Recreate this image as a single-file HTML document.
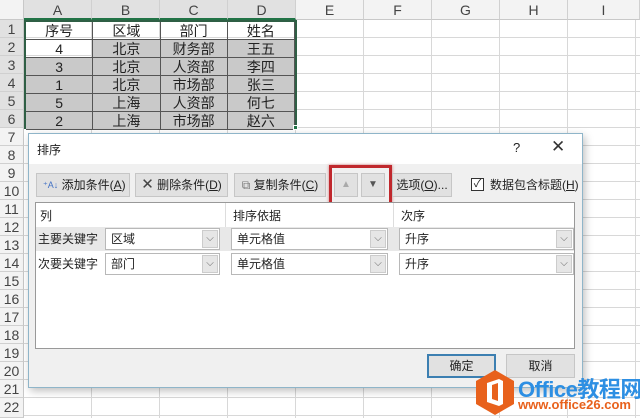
<!DOCTYPE html>
<html><head><meta charset="utf-8"><style>
*{margin:0;padding:0;box-sizing:border-box}
body{width:640px;height:418px;overflow:hidden;position:relative;background:#fff;font-family:"Liberation Sans","Noto Sans CJK SC",sans-serif;color:#222}
.a{position:absolute}
.grid{left:24px;top:20px;width:616px;height:398px;background:
repeating-linear-gradient(90deg,transparent 0 67px,#d8d8d8 67px 68px),
repeating-linear-gradient(180deg,transparent 0 17px,#d8d8d8 17px 18px)}
.colh{top:0;height:20px;width:68px;background:#f3f3f3;border-right:1px solid #d0d0d0;border-bottom:1px solid #c8c8c8;text-align:center;font-size:14px;line-height:20px;color:#444}
.colh.s{background:#e1e1e1;border-bottom:2px solid #217346}
.rowh{left:0;width:24px;height:18px;background:#f3f3f3;border-bottom:1px solid #d0d0d0;border-right:1px solid #c8c8c8;text-align:center;font-size:14px;line-height:18px;color:#444}
.rowh.s{background:#e1e1e1}
.c{height:18px;width:68px;text-align:center;font-size:14px;line-height:18px;border-right:1px solid #555;border-bottom:1px solid #555}
.g{background:#c9c9c9}
.btn{background:#e1e1e1;border:1px solid #c6c6c6;font-size:12px;line-height:22px;height:24px;text-align:center;color:#222}
.combo{background:#fff;border:1px solid #b8b8b8;height:22px;font-size:12px;line-height:20px;padding-left:5px}
.combo i{position:absolute;right:1px;top:1px;width:16px;height:18px;background:#e6e6e6;border:1px solid #ccc;font-style:normal;font-size:10px;line-height:16px;text-align:center;color:#666}
</style></head><body>
<div class="a grid"></div>
<div class="a" style="left:0;top:0;width:24px;height:20px;background:#f3f3f3;border-right:1px solid #c8c8c8;border-bottom:1px solid #c8c8c8"></div>
<div class="a colh s" style="left:24px">A</div>
<div class="a colh s" style="left:92px">B</div>
<div class="a colh s" style="left:160px">C</div>
<div class="a colh s" style="left:228px">D</div>
<div class="a colh" style="left:296px">E</div>
<div class="a colh" style="left:364px">F</div>
<div class="a colh" style="left:432px">G</div>
<div class="a colh" style="left:500px">H</div>
<div class="a colh" style="left:568px;width:72px">I</div>
<div class="a rowh s" style="top:20px">1</div>
<div class="a rowh s" style="top:38px">2</div>
<div class="a rowh s" style="top:56px">3</div>
<div class="a rowh s" style="top:74px">4</div>
<div class="a rowh s" style="top:92px">5</div>
<div class="a rowh s" style="top:110px">6</div>
<div class="a rowh" style="top:128px">7</div>
<div class="a rowh" style="top:146px">8</div>
<div class="a rowh" style="top:164px">9</div>
<div class="a rowh" style="top:182px">10</div>
<div class="a rowh" style="top:200px">11</div>
<div class="a rowh" style="top:218px">12</div>
<div class="a rowh" style="top:236px">13</div>
<div class="a rowh" style="top:254px">14</div>
<div class="a rowh" style="top:272px">15</div>
<div class="a rowh" style="top:290px">16</div>
<div class="a rowh" style="top:308px">17</div>
<div class="a rowh" style="top:326px">18</div>
<div class="a rowh" style="top:344px">19</div>
<div class="a rowh" style="top:362px">20</div>
<div class="a rowh" style="top:380px">21</div>
<div class="a rowh" style="top:398px;height:20px">22</div>

<div class="a" style="left:24px;top:20px;width:273px;height:109px;border:2px solid #2f5f45">
<div style="display:flex"><div class="c">序号</div><div class="c">区域</div><div class="c">部门</div><div class="c">姓名</div></div>
<div style="display:flex"><div class="c">4</div><div class="c g">北京</div><div class="c g">财务部</div><div class="c g">王五</div></div>
<div style="display:flex"><div class="c g">3</div><div class="c g">北京</div><div class="c g">人资部</div><div class="c g">李四</div></div>
<div style="display:flex"><div class="c g">1</div><div class="c g">北京</div><div class="c g">市场部</div><div class="c g">张三</div></div>
<div style="display:flex"><div class="c g">5</div><div class="c g">上海</div><div class="c g">人资部</div><div class="c g">何七</div></div>
<div style="display:flex"><div class="c g">2</div><div class="c g">上海</div><div class="c g">市场部</div><div class="c g">赵六</div></div>
</div>
<div class="a" style="left:293px;top:125px;width:5px;height:5px;background:#217346;border:1px solid #fff"></div>

<!-- dialog -->
<div class="a" style="left:28px;top:133px;width:555px;height:255px;background:#f0f0f0;border:1px solid #8fb5c9;box-shadow:2px 3px 8px rgba(0,0,0,.25)">
<div class="a" style="left:0;top:0;width:553px;height:30px;background:#fff"></div>
<div class="a" style="left:8px;top:7px;font-size:12px">排序</div>
<div class="a" style="left:484px;top:6px;font-size:13px">?</div>
<div class="a" style="left:522px;top:3px;font-size:17px;color:#333">✕</div>
</div>
<div class="a btn" style="left:36px;top:173px;width:94px;text-align:left;padding-left:6px"><span style="color:#4472c4;font-size:9px;vertical-align:top">⁺A↓</span> 添加条件(<u>A</u>)</div>
<div class="a btn" style="left:135px;top:173px;width:93px"><span style="font-size:15px;color:#444">✕</span> 删除条件(<u>D</u>)</div>
<div class="a btn" style="left:234px;top:173px;width:92px"><span style="color:#777">⧉</span> 复制条件(<u>C</u>)</div>
<div class="a btn" style="left:334px;top:173px;width:24px;color:#aaa;font-size:10px">▲</div>
<div class="a btn" style="left:361px;top:173px;width:24px;color:#555;font-size:10px">▼</div>
<div class="a" style="left:329px;top:165px;width:63px;height:41px;border:3px solid #c0282d;box-shadow:0 0 3px rgba(180,0,0,.5)"></div>
<div class="a btn" style="left:392px;top:173px;width:60px">选项(<u>O</u>)...</div>
<div class="a" style="left:471px;top:178px;width:13px;height:13px;border:1px solid #333;background:#fff;font-size:11px;line-height:11px;text-align:center">✓</div>
<div class="a" style="left:490px;top:176px;font-size:12px">数据包含标题(<u>H</u>)</div>

<div class="a" style="left:35px;top:202px;width:540px;height:147px;background:#fff;border:1px solid #999"></div>
<div class="a" style="left:225px;top:203px;width:1px;height:24px;background:#ddd"></div>
<div class="a" style="left:393px;top:203px;width:1px;height:24px;background:#ddd"></div>
<div class="a" style="left:40px;top:207px;font-size:12px">列</div>
<div class="a" style="left:233px;top:207px;font-size:12px">排序依据</div>
<div class="a" style="left:401px;top:207px;font-size:12px">次序</div>
<div class="a" style="left:36px;top:227px;width:538px;height:24px;background:#e8e8e8"></div>
<div class="a" style="left:38px;top:230px;font-size:12px">主要关键字</div>
<div class="a" style="left:38px;top:255px;font-size:12px">次要关键字</div>
<div class="a combo" style="left:105px;top:228px;width:115px">区域<i>⌵</i></div>
<div class="a combo" style="left:231px;top:228px;width:157px">单元格值<i>⌵</i></div>
<div class="a combo" style="left:399px;top:228px;width:175px">升序<i>⌵</i></div>
<div class="a combo" style="left:105px;top:253px;width:115px">部门<i>⌵</i></div>
<div class="a combo" style="left:231px;top:253px;width:157px">单元格值<i>⌵</i></div>
<div class="a combo" style="left:399px;top:253px;width:175px">升序<i>⌵</i></div>

<div class="a btn" style="left:427px;top:354px;width:69px;border:2px solid #3c7fb1;line-height:20px">确定</div>
<div class="a btn" style="left:506px;top:354px;width:69px">取消</div>

<!-- watermark -->
<svg class="a" style="left:475px;top:369px" width="40" height="47" viewBox="0 0 40 47">
<polygon points="20,1 39,12 39,35 20,46 1,35 1,12" fill="#e8611c"/>
<path d="M12 14 L24 10 L28 12 L28 35 L24 37 L12 33 Z" fill="#fff"/>
<path d="M17 16 L23 14 L23 32 L17 30 Z" fill="#e8611c"/>
</svg>
<div class="a" style="left:518px;top:372px;font-size:22px;font-weight:bold;color:#2d8fe3;letter-spacing:-0.5px;white-space:nowrap">Office教程网</div>
<div class="a" style="left:518px;top:397px;font-size:13px;font-weight:bold;color:#e8611c;white-space:nowrap">www.office26.com</div>
</body></html>
